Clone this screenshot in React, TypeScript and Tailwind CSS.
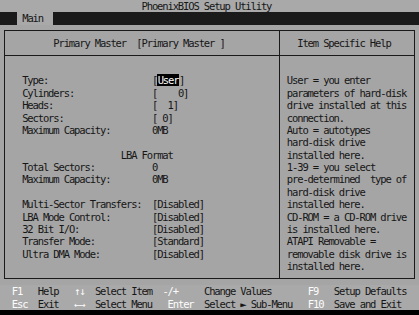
import React from "react";

type Seg = { col: number; text: string; key?: boolean };

function segLine(segs: Seg[]) {
  let cur = 0;
  const out: React.ReactNode[] = [];
  segs.forEach((s, i) => {
    const pad = " ".repeat(Math.max(0, s.col - cur));
    out.push(
      <span key={i}>
        {pad}
        <span className={s.key ? "text-[#fcfcfc]" : "text-[#161616]"}>{s.text}</span>
      </span>
    );
    cur = s.col + s.text.length;
  });
  return out;
}

const leftRows: (null | string | [string, string])[] = [
  ["Type:", "USER"],
  ["Cylinders:", "[    0]"],
  ["Heads:", "[  1]"],
  ["Sectors:", "[ 0]"],
  ["Maximum Capacity:", "0MB"],
  null,
  "LBA",
  ["Total Sectors:", "0"],
  ["Maximum Capacity:", "0MB"],
  null,
  ["Multi-Sector Transfers:", "[Disabled]"],
  ["LBA Mode Control:", "[Disabled]"],
  ["32 Bit I/O:", "[Disabled]"],
  ["Transfer Mode:", "[Standard]"],
  ["Ultra DMA Mode:", "[Disabled]"],
];

const helpLines = [
  "User = you enter",
  "parameters of hard-disk",
  "drive installed at this",
  "connection.",
  "Auto = autotypes",
  "hard-disk drive",
  "installed here.",
  "1-39 = you select",
  "pre-determined  type of",
  "hard-disk drive",
  "installed here.",
  "CD-ROM = a CD-ROM drive",
  "is installed here.",
  "ATAPI Removable =",
  "removable disk drive is",
  "installed here.",
];

const foot1: Seg[] = [
  { col: 2, text: "F1", key: true },
  { col: 7, text: "Help" },
  { col: 14, text: "\u2191\u2193", key: true },
  { col: 18, text: "Select Item" },
  { col: 31, text: "-/+", key: true },
  { col: 39, text: "Change Values" },
  { col: 59, text: "F9", key: true },
  { col: 64, text: "Setup Defaults" },
];
const foot2: Seg[] = [
  { col: 2, text: "Esc", key: true },
  { col: 7, text: "Exit" },
  { col: 14, text: "\u2190\u2192", key: true },
  { col: 18, text: "Select Menu" },
  { col: 32, text: "Enter", key: true },
  { col: 39, text: "Select \u25BA Sub-Menu" },
  { col: 59, text: "F10", key: true },
  { col: 64, text: "Save and Exit" },
];

export default function App() {
  return (
    <div
      className="w-[419px] h-[315px] bg-black overflow-hidden text-[10.5px] tracking-[-1.13px] leading-[12.4px] text-[#161616] whitespace-pre"
      style={{ fontFamily: '"DejaVu Sans Mono", "Liberation Mono", monospace' }}
    >
      {/* title bar */}
      <div className="h-[12.4px] bg-[#a9a9a9] pl-[141.5px]">PhoenixBIOS Setup Utility</div>
      {/* menu bar */}
      <div className="h-[12.4px] bg-[#1a1a1a] pl-[17px] flex">
        <div className="w-[36.3px] h-full bg-[#a9a9a9] pl-[5.2px]">Main</div>
      </div>
      {/* main area */}
      <div className="h-[260.4px] bg-[#a5a5a5] pt-[5.7px] pl-[3.5px]">
        <div className="w-[411px] h-[249px] border border-[#1a1a1a] flex flex-col">
          <div className="flex h-[24.8px] border-b border-[#1a1a1a]">
            <div className="w-[275px] border-r border-[#1a1a1a] pt-[5.7px] pl-[48.8px]">
              Primary Master  [Primary Master ]
            </div>
            <div className="flex-1 pt-[5.7px] pl-[17.7px]">Item Specific Help</div>
          </div>
          <div className="flex h-[222.2px]">
            <div className="w-[275px] border-r border-[#1a1a1a] pt-[18.1px] pl-[17.66px]">
              {leftRows.map((r, i) => {
                if (r === null) return <div key={i} className="h-[12.4px]" />;
                if (r === "LBA")
                  return (
                    <div key={i} className="h-[12.4px]">
                      {"                   LBA Format"}
                    </div>
                  );
                const [label, val] = r;
                return (
                  <div key={i} className="h-[12.4px]">
                    {label.padEnd(25, " ")}
                    {val === "USER" ? (
                      <span>
                        [<span className="bg-black text-[#fcfcfc] px-[0.5px]">User</span>]
                      </span>
                    ) : (
                      val
                    )}
                  </div>
                );
              })}
            </div>
            <div className="flex-1 pt-[18.1px] pl-[7.35px]">
              {helpLines.map((l, i) => (
                <div key={i} className="h-[12.4px]">
                  {l}
                </div>
              ))}
            </div>
          </div>
        </div>
      </div>
      {/* footer */}
      <div className="h-[24.8px] bg-[#a9a9a9] pl-[1.4px]">
        <div className="h-[12.4px]">{segLine(foot1)}</div>
        <div className="h-[12.4px]">{segLine(foot2)}</div>
      </div>
    </div>
  );
}
